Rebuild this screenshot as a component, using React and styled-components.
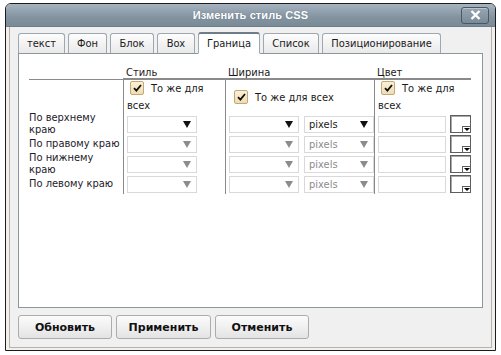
import styled, { createGlobalStyle } from "styled-components";

const Global = createGlobalStyle`
  html, body {
    margin: 0;
    background: #ffffff;
  }
  body {
    font-family: "DejaVu Sans Condensed", "DejaVu Sans", Verdana, sans-serif;
    font-size: 11px;
    color: #1a1a1a;
  }
`;

const Dialog = styled.div`
  width: 491px;
  height: 348px;
  margin: 3px 0 0 5px;
  box-sizing: border-box;
  border: 1px solid #1c1c1c;
  border-radius: 6px 6px 0 0;
  overflow: hidden;
  display: flex;
  flex-direction: column;
  background: #f0f0f0;
`;

const TitleBar = styled.div`
  height: 22px;
  flex: none;
  display: grid;
  grid-template-columns: 1fr auto 1fr;
  align-items: center;
  padding: 0 6px;
  background: linear-gradient(#a6b4c0, #8393a0 60%, #7a8b98);
  border-bottom: 1px solid #6d7d8a;
`;

const Title = styled.div`
  grid-column: 2;
  font-family: "Liberation Sans", Arial, sans-serif;
  font-weight: bold;
  font-size: 11px;
  letter-spacing: 0.1px;
  color: #ffffff;
  text-shadow: 0 0 1px rgba(60, 75, 90, 0.6);
`;

const CloseButton = styled.button`
  grid-column: 3;
  justify-self: end;
  width: 28px;
  height: 17px;
  padding: 0;
  display: flex;
  align-items: center;
  justify-content: center;
  border: 1px solid #4b5864;
  border-radius: 3px;
  background: linear-gradient(#97a6b2, #7a8a97);
  box-shadow: inset 0 1px 0 rgba(255, 255, 255, 0.35);
`;

const Frame = styled.div`
  flex: 1;
  padding: 0 3px 2px 3px;
  display: flex;
`;

const Inner = styled.div`
  flex: 1;
  border: 1px solid #bcb0a3;
  border-top: none;
  padding: 4px 8px 8px 8px;
  display: flex;
  flex-direction: column;
`;

const Tabs = styled.div`
  display: flex;
  align-items: flex-end;
  gap: 3px;
  height: 22px;
  position: relative;
  z-index: 1;
`;

const Tab = styled.div`
  width: ${(p) => p.$w}px;
  height: ${(p) => (p.$active ? "22px" : "20px")};
  box-sizing: border-box;
  display: flex;
  align-items: center;
  justify-content: center;
  border: 1px solid #9ea8b0;
  border-top: ${(p) => (p.$active ? "2px solid #6c7c8a" : "1px solid #9ea8b0")};
  border-bottom: ${(p) => (p.$active ? "1px solid #ffffff" : "none")};
  border-radius: 3px 3px 0 0;
  background: ${(p) =>
    p.$active ? "#ffffff" : "linear-gradient(#fdfdfd, #e9e9e9)"};
  color: #1a1a1a;
  margin-bottom: ${(p) => (p.$active ? "-1px" : "0")};
`;

const Panel = styled.div`
  height: 255px;
  box-sizing: border-box;
  border: 1px solid #8b979b;
  background: #ffffff;
  padding: 11px 0 0 10px;
`;

const Grid = styled.div`
  display: grid;
  grid-template-columns: 94px 102px 149px 97px;
  grid-template-rows: 15px 34px 20px 20px 20px 20px;
`;

const HeadCell = styled.div`
  border-bottom: 1px solid #8a8a8a;
  padding-left: 3px;
  display: flex;
  align-items: flex-end;
  line-height: 13px;
  box-shadow: ${(p) => (p.$first ? "none" : "inset 1px -11px 0 -10px #8a8a8a")};
`;

const Cell = styled.div`
  border-left: ${(p) => (p.$first ? "none" : "1px solid #8a8a8a")};
  padding-left: ${(p) => (p.$first ? 0 : 3)}px;
  display: flex;
  align-items: center;
  gap: ${(p) => p.$gap || 0}px;
  min-height: 0;
`;

const Label = styled.div`
  line-height: 12px;
  color: #241a2a;
`;

const CheckLine = styled.div`
  line-height: 17px;
  padding-left: ${(p) => p.$indent || 0}px;
`;

const Box = styled.span`
  display: inline-flex;
  vertical-align: middle;
  align-items: center;
  justify-content: center;
  width: 12px;
  height: 12px;
  margin: 0 7px 2px 3px;
  border: 1px solid #c2a878;
  border-radius: 2px;
  background: linear-gradient(#fbf0d6, #efdcb2);
`;

const Select = styled.div`
  width: ${(p) => p.$w}px;
  height: 17px;
  box-sizing: border-box;
  border: 1px solid #d9d9d9;
  background: #ffffff;
  display: flex;
  align-items: center;
  justify-content: space-between;
  padding: 0 5px 0 4px;
  color: ${(p) => (p.$off ? "#8c8c8c" : "#1a1a1a")};
`;

const Arrow = styled.span`
  width: 0;
  height: 0;
  border-left: 4px solid transparent;
  border-right: 4px solid transparent;
  border-top: 7px solid ${(p) => (p.$off ? "#8c8c8c" : "#111111")};
  margin-left: auto;
`;

const TextInput = styled.div`
  width: 69px;
  height: 17px;
  box-sizing: border-box;
  border: 1px solid #d9d9d9;
  background: #ffffff;
`;

const ColorButton = styled.div`
  position: relative;
  width: 21px;
  height: 18px;
  box-sizing: border-box;
  border: 1px solid #5e5e5e;
  box-shadow: inset 1px 1px 0 #a8a8a8;
  background: #ffffff;
`;

const Drop = styled.span`
  position: absolute;
  right: 0;
  bottom: 0;
  width: 7px;
  height: 5px;
  border-left: 1px solid #5e5e5e;
  border-top: 1px solid #5e5e5e;
  background: #ffffff;
  display: flex;
  align-items: center;
  justify-content: center;
  &::after {
    content: "";
    border-left: 3px solid transparent;
    border-right: 3px solid transparent;
    border-top: 3px solid #000000;
  }
`;

const Buttons = styled.div`
  display: flex;
  gap: 4px;
  margin-top: 7px;
`;

const Button = styled.button`
  width: ${(p) => p.$w}px;
  height: 24px;
  box-sizing: border-box;
  border: 1px solid #acacac;
  border-radius: 3px;
  background: linear-gradient(#fbfbfb, #f0f0f0 50%, #e3e3e3);
  font-family: "DejaVu Sans", Verdana, sans-serif;
  font-weight: bold;
  font-size: 11px;
  color: #111111;
  padding: 0;
`;

const Check = () => (
  <Box>
    <svg width="9" height="8" viewBox="0 0 9 8">
      <path d="M1 4.2 L3.4 6.6 L8 1" fill="none" stroke="#111" strokeWidth="1.8" />
    </svg>
  </Box>
);

const rows = [
  { label: "По верхнему краю", off: false },
  { label: "По правому краю", off: true },
  { label: "По нижнему краю", off: true },
  { label: "По левому краю", off: true },
];

const tabs = [
  ["текст", 47],
  ["Фон", 39],
  ["Блок", 44],
  ["Box", 38],
  ["Граница", 62],
  ["Список", 56],
  ["Позиционирование", 119],
];

export default function App() {
  return (
    <>
      <Global />
      <Dialog>
        <TitleBar>
          <Title>Изменить стиль CSS</Title>
          <CloseButton>
            <svg width="11" height="10" viewBox="0 0 11 10">
              <path d="M1.5 1 L9.5 9 M9.5 1 L1.5 9" stroke="#fff" strokeWidth="2.4" />
            </svg>
          </CloseButton>
        </TitleBar>
        <Frame>
          <Inner>
            <Tabs>
              {tabs.map(([t, w]) => (
                <Tab key={t} $active={t === "Граница"} $w={w}>
                  {t}
                </Tab>
              ))}
            </Tabs>
            <Panel>
              <Grid>
                <HeadCell $first />
                <HeadCell>Стиль</HeadCell>
                <HeadCell>Ширина</HeadCell>
                <HeadCell>Цвет</HeadCell>

                <Cell $first />
                <Cell>
                  <CheckLine>
                    <Check />
                    То же для всех
                  </CheckLine>
                </Cell>
                <Cell>
                  <CheckLine $indent={2}>
                    <Check />
                    То же для всех
                  </CheckLine>
                </Cell>
                <Cell>
                  <CheckLine>
                    <Check />
                    То же для всех
                  </CheckLine>
                </Cell>

                {rows.map((r) => (
                  <>
                    <Cell $first key={r.label}>
                      <Label>{r.label}</Label>
                    </Cell>
                    <Cell>
                      <Select $w={70} $off={r.off}>
                        <Arrow $off={r.off} />
                      </Select>
                    </Cell>
                    <Cell $gap={5}>
                      <Select $w={70} $off={r.off}>
                        <Arrow $off={r.off} />
                      </Select>
                      <Select $w={70} $off={r.off}>
                        pixels
                        <Arrow $off={r.off} />
                      </Select>
                    </Cell>
                    <Cell $gap={4}>
                      <TextInput />
                      <ColorButton>
                        <Drop />
                      </ColorButton>
                    </Cell>
                  </>
                ))}
              </Grid>
            </Panel>
            <Buttons>
              <Button $w={94}>Обновить</Button>
              <Button $w={95}>Применить</Button>
              <Button $w={94}>Отменить</Button>
            </Buttons>
          </Inner>
        </Frame>
      </Dialog>
    </>
  );
}
